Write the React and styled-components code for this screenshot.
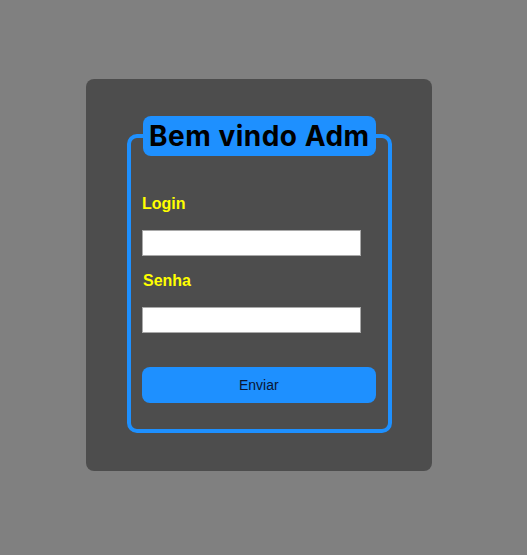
import React from "react";
import styled, { createGlobalStyle } from "styled-components";

const Global = createGlobalStyle`
  html, body { margin: 0; padding: 0; background: #808080; }
  body { font-family: "Liberation Sans", Arial, sans-serif; }
`;

const Page = styled.div`
  min-height: 555px;
  display: flex;
  align-items: flex-start;
  padding: 79px 0 0 86px;
  box-sizing: border-box;
`;

const Card = styled.div`
  width: 346px;
  height: 392px;
  box-sizing: border-box;
  background: #4d4d4d;
  border-radius: 8px;
  padding: 37px 0 0 41px;
`;

const Fieldset = styled.fieldset`
  width: 264px;
  box-sizing: border-box;
  margin: 0;
  border: 4px solid #1e90ff;
  border-radius: 10px;
  padding: 0 12px 26px 11px;
`;

const Legend = styled.legend`
  background: #1e90ff;
  color: #000;
  border-radius: 8px;
  margin-left: 1px;
  padding: 0 6px;
  height: 40px;
  box-sizing: border-box;
  font-family: Inter, "Noto Sans", sans-serif;
  font-weight: 700;
  font-size: 28px;
  letter-spacing: 0.5px;
  line-height: 40px;
  white-space: nowrap;
`;

const Form = styled.div`
  display: flex;
  flex-direction: column;
  align-items: flex-start;
  padding-top: 39px;
`;

const Label = styled.label`
  color: #ffff00;
  font-weight: 700;
  font-size: 16px;
  line-height: 18px;
  margin-left: ${(p) => p.$shift || 0}px;
  margin-bottom: 17px;
`;

const Input = styled.input`
  width: 219px;
  height: 26px;
  box-sizing: border-box;
  border: 1px solid #a9a9a9;
  background: #fff;
  margin: 0 0 16px 0;
  padding: 0 4px;
  outline: none;
`;

const Button = styled.button`
  width: 100%;
  height: 36px;
  margin-top: 18px;
  border: none;
  border-radius: 8px;
  background: #1e90ff;
  color: #0a1533;
  font-family: "Liberation Sans", Arial, sans-serif;
  font-size: 14px;
  cursor: pointer;
`;

export default function App() {
  return (
    <>
      <Global />
      <Page>
        <Card>
          <Fieldset>
            <Legend>Bem vindo Adm</Legend>
            <Form>
              <Label>Login</Label>
              <Input type="text" />
              <Label $shift={1}>Senha</Label>
              <Input type="password" />
              <Button>Enviar</Button>
            </Form>
          </Fieldset>
        </Card>
      </Page>
    </>
  );
}
